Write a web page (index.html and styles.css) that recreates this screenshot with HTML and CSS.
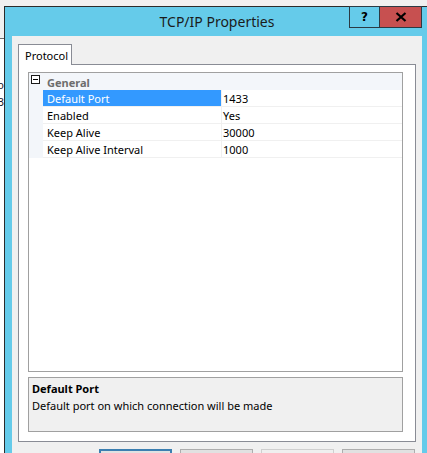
FILE: index.html
```html
<!DOCTYPE html>
<html>
<head>
<meta charset="utf-8">
<link rel="stylesheet" href="styles.css">
</head>
<body>
<div class="desktop">
  <div class="behind">
    <span class="frag frag-o">o</span>
    <span class="frag frag-3">3</span>
  </div>
  <div class="window">
    <div class="titlebar">
      <div class="title">TCP/IP Properties</div>
      <div class="caption-buttons">
        <div class="cbtn help">?</div>
        <div class="cbtn close">
          <svg width="12" height="10" viewBox="0 0 12 10"><path d="M1.5 1 L10.5 9 M10.5 1 L1.5 9" stroke="#000" stroke-width="2.2" fill="none"/></svg>
        </div>
      </div>
    </div>
    <div class="client">
      <div class="tabs">
        <div class="tab">Protocol</div>
      </div>
      <div class="panel">
        <div class="grid">
          <div class="row category">
            <div class="margin"><span class="toggle"></span></div>
            <div class="cat-label">General</div>
          </div>
          <div class="row prop selected">
            <div class="margin"></div>
            <div class="name">Default Port</div>
            <div class="value">1433</div>
          </div>
          <div class="row prop">
            <div class="margin"></div>
            <div class="name">Enabled</div>
            <div class="value">Yes</div>
          </div>
          <div class="row prop">
            <div class="margin"></div>
            <div class="name">Keep Alive</div>
            <div class="value">30000</div>
          </div>
          <div class="row prop">
            <div class="margin"></div>
            <div class="name">Keep Alive Interval</div>
            <div class="value">1000</div>
          </div>
        </div>
        <div class="desc">
          <div class="desc-title">Default Port</div>
          <div class="desc-text">Default port on which connection will be made</div>
        </div>
      </div>
      <div class="buttons">
        <div class="btn default"></div>
        <div class="btn"></div>
        <div class="btn disabled"></div>
        <div class="btn"></div>
      </div>
    </div>
  </div>
</div>
</body>
</html>
```
FILE: styles.css
```css
html, body {
  margin: 0;
  padding: 0;
  background: #f0f0f0;
}
body {
  font-family: "Segoe UI", "Noto Sans", "Open Sans", sans-serif;
  font-size: 11px;
  color: #000;
}
.desktop {
  position: relative;
  width: 427px;
  height: 453px;
  overflow: hidden;
  background: #f0f0f0;
}
.behind {
  position: absolute;
  left: 0;
  top: 38px;
  width: 4px;
  height: 415px;
  background: #fff;
  border-top: 1px solid #6e6e6e;
  overflow: hidden;
}
.frag {
  position: absolute;
  right: 0;
  font-size: 11px;
  line-height: 11px;
  color: #1a1a2a;
}
.frag-o { top: 40px; }
.frag-3 { top: 57px; }
.window {
  position: relative;
  margin: 6px 0 0 4px;
  width: 440px;
  height: 460px;
  border-top: 1px solid #2b2b2b;
  border-left: 1px solid #2b2b2b;
  background: #65cbea;
  box-sizing: border-box;
  padding: 0 0 0 7px;
  display: flex;
  flex-direction: column;
}
.titlebar {
  height: 29px;
  display: flex;
  position: relative;
}
.title {
  width: 410px;
  text-align: center;
  font-size: 14px;
  line-height: 29px;
  color: #1b1b1b;
}
.caption-buttons {
  position: absolute;
  top: -1px;
  left: 337px;
  display: flex;
}
.cbtn {
  height: 22px;
  box-sizing: border-box;
  border: 1px solid #2b3a44;
  display: flex;
  align-items: center;
  justify-content: center;
}
.help {
  width: 30px;
  border-right: none;
  font-family: "DejaVu Sans", sans-serif;
  font-weight: bold;
  font-size: 12px;
  color: #000;
}
.close {
  width: 43px;
  background: #c75050;
}
.client {
  width: 410px;
  flex: 1;
  background: #f0f0f0;
  padding: 8px 0 0 6px;
  box-sizing: border-box;
}
.tabs {
  display: flex;
  height: 20px;
}
.tab {
  width: 54px;
  height: 21px;
  box-sizing: border-box;
  background: #fff;
  border: 1px solid #898c95;
  border-bottom: none;
  padding-left: 6px;
  line-height: 21px;
  position: relative;
  z-index: 1;
}
.panel {
  width: 398px;
  height: 378px;
  box-sizing: border-box;
  background: #fff;
  border: 1px solid #898c95;
  padding: 7px 0 0 9px;
  display: flex;
  flex-direction: column;
  gap: 5px;
}
.grid {
  width: 375px;
  height: 300px;
  box-sizing: border-box;
  border: 1px solid #a0a0a0;
  background: #fff;
}
.row {
  display: flex;
  height: 17px;
  box-sizing: border-box;
}
.category {
  background: #f3f6fa;
}
.margin {
  width: 14px;
  flex: none;
  background: #f3f6fa;
  position: relative;
}
.toggle {
  position: absolute;
  left: 2px;
  top: 2px;
  width: 9px;
  height: 9px;
  box-sizing: border-box;
  border: 1px solid #1a1a1a;
  background: #fff;
}
.toggle::after {
  content: "";
  position: absolute;
  left: 1px;
  top: 3px;
  width: 5px;
  height: 1px;
  background: #000;
}
.cat-label {
  padding-left: 4px;
  line-height: 19px;
  font-weight: bold;
  color: #6d6d6d;
}
.prop {
  border-bottom: 1px solid #f0f0f0;
}
.prop .margin {
  height: 17px;
  margin-bottom: -1px;
}
.name {
  width: 179px;
  flex: none;
  padding-left: 4px;
  box-sizing: border-box;
  line-height: 18px;
  height: 16px;
  border-right: 1px solid #f0f0f0;
}
.value {
  flex: 1;
  padding-left: 1px;
  line-height: 18px;
  height: 16px;
}
.selected .name {
  background: #3399ff;
  color: #fff;
}
.desc {
  width: 375px;
  height: 55px;
  box-sizing: border-box;
  border: 1px solid #a0a0a0;
  background: #f0f0f0;
  padding: 2px 0 0 3px;
}
.desc-title {
  font-weight: bold;
  line-height: 17px;
}
.desc-text {
  line-height: 17px;
}
.buttons {
  display: flex;
  gap: 8px;
  padding: 7px 0 0 81px;
}
.btn {
  width: 73px;
  height: 23px;
  box-sizing: border-box;
  border: 1px solid #adadad;
  background: #e1e1e1;
}
.btn.default {
  border: 2px solid #3c7fb1;
}
.btn.disabled {
  border-color: #cfcfcf;
  background: #efefef;
}
```
